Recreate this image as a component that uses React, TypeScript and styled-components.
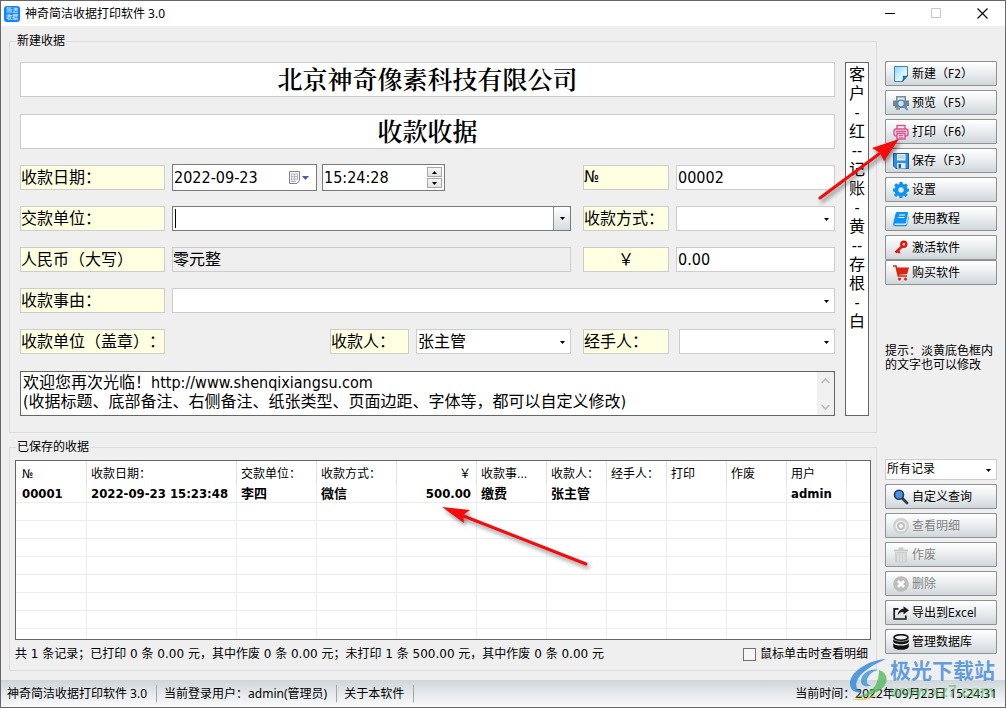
import React from 'react';
import styled, { createGlobalStyle, css } from 'styled-components';

const uiFont = '"DejaVu Sans Condensed", "Noto Sans CJK SC", sans-serif';
const titleFont = '"Noto Sans", "Noto Sans CJK SC", sans-serif';
const line = '#cdcdcd';
const dark = '#666666';

const GlobalStyle = createGlobalStyle`
  *, *::before, *::after { box-sizing: border-box; }
  body { margin: 0; background: #efefef; text-spacing-trim: space-all; }
  input, select, textarea, button {
    font: inherit; color: inherit; margin: 0; border-radius: 0; outline: 0;
    text-spacing-trim: inherit;
  }
`;

const Window = styled.div`
  position: relative;
  display: flex;
  flex-direction: column;
  min-height: 100vh;
  border: 1px solid ${dark};
  background: #efefef;
  color: #000;
  font-family: ${uiFont};
  font-size: 12px;
  line-height: 15px;
`;

const TitleBar = styled.header`
  display: flex;
  align-items: center;
  height: 25px;
  padding-left: 3px;
  background: #fff;
  font-family: ${titleFont};
`;

const AppIcon = styled.span`
  display: flex;
  align-items: center;
  justify-content: center;
  width: 16px;
  height: 16px;
  margin-right: 5px;
  border-radius: 3px;
  background: #0a84ff;
  color: #fff;
  font-size: 6px;
  line-height: 7px;
`;

const Caption = styled.h1`
  flex: 1;
  margin: 0;
  font-size: 12px;
  font-weight: 400;
`;

const WindowButton = styled.button<{ $dim?: boolean }>`
  width: 46px;
  height: 25px;
  padding: 0;
  border: 0;
  background: transparent;
  color: ${p => (p.$dim ? '#c8c8c8' : '#000')};
  svg { display: block; margin: 0 auto; }
`;

const Body = styled.main`
  flex: 1;
  display: grid;
  grid-template-columns: minmax(0, 1fr) 112px;
  grid-template-rows: auto 1fr;
  gap: 7px 8px;
  padding: 8px 8px 9px;
`;

const Group = styled.fieldset`
  display: flex;
  min-width: 0;
  margin: 0;
  border: 1px solid #dcdcdc;
`;

const FormGroup = styled(Group)`
  gap: 10px;
  padding: 13px 7px 16px 10px;
`;

const SavedGroup = styled(Group)`
  position: relative;
  flex-direction: column;
  padding: 5px 5px 0;
`;

const FormLegend = styled.legend`
  margin-left: -4px;
  padding: 0 1px;
  line-height: 15px;
`;

const SavedLegend = styled(FormLegend)`
  margin-left: 1px;
`;

const Receipt = styled.div`
  flex: 1;
  display: flex;
  flex-direction: column;
  min-width: 0;
  font-size: 16px;
  line-height: 19px;
`;

const Heading = styled.input`
  width: 100%;
  height: 35px;
  margin-bottom: 17px;
  padding: 0 0 3px;
  border: 1px solid ${line};
  background: #fff;
  text-align: center;
  font-family: "Noto Serif CJK SC", "Noto Sans CJK SC", serif;
  font-size: 25px;
  font-weight: 600;
  & + & { margin-bottom: 16px; }
`;

const Rows = styled.div`
  display: flex;
  flex-direction: column;
  gap: 16px;
  margin-bottom: 17px;
`;

const Row = styled.div`
  display: flex;
  align-items: center;
  gap: 7px;
  height: 25px;
`;

const Main = styled.div<{ $end?: boolean }>`
  flex: 1;
  display: flex;
  align-items: center;
  justify-content: ${p => (p.$end ? 'flex-end' : 'flex-start')};
  gap: ${p => (p.$end ? 7 : 5)}px;
  min-width: 0;
  margin-right: 5px;
`;

const Field = styled.input<{ $w?: number; $kind?: 'name' | 'off'; $center?: boolean }>`
  flex: ${p => (p.$w ? `0 0 ${p.$w}px` : '1')};
  width: ${p => (p.$w ? `${p.$w}px` : 'auto')};
  min-width: 0;
  height: 25px;
  padding: ${p => (p.$kind ? '0 0 3px' : '0 1px')};
  border: 1px solid ${line};
  background: ${p => (p.$kind === 'name' ? '#ffffe1' : p.$kind === 'off' ? '#efefef' : '#fff')};
  text-align: ${p => (p.$center ? 'center' : 'left')};
`;

const SelectBox = styled.div<{ $w?: number; $h?: number; $indent?: number }>`
  position: relative;
  flex: ${p => (p.$w ? `0 0 ${p.$w}px` : p.$h ? 'none' : '1')};
  height: ${p => p.$h || 25}px;
  padding-left: ${p => p.$indent || 0}px;
  select {
    appearance: none;
    display: block;
    width: 100%;
    height: 100%;
    padding: 0 20px 0 1px;
    border: 1px solid ${line};
    background: #fff;
  }
  svg {
    position: absolute;
    right: 6px;
    top: 50%;
    margin-top: -1px;
    pointer-events: none;
  }
`;

const Boxed = styled.div<{ $w?: number; $h: number }>`
  flex: ${p => (p.$w ? `0 0 ${p.$w}px` : '1')};
  display: flex;
  align-items: center;
  min-width: 0;
  height: ${p => p.$h}px;
  border: 1px solid #7a7a7a;
  background: #fff;
  input {
    flex: 1;
    min-width: 0;
    height: 100%;
    padding: 0 1px;
    border: 0;
    background: transparent;
  }
`;

const Caret = styled.i`
  width: 1px;
  height: 19px;
  margin-left: 2px;
  background: #000;
`;

const raised = css`
  border: 1px solid #8f9294;
  background: linear-gradient(#fff, #eceff0 45%, #cfd6da);
`;

const DropButton = styled.button`
  width: 17px;
  height: 100%;
  padding: 0;
  border: 0;
  border-left: 1px solid #8f9294;
  background: linear-gradient(#fff, #eceff0 45%, #d5dce0);
  svg { display: block; margin: 0 auto; }
`;

const CalendarButton = styled.button`
  width: 28px;
  height: 100%;
  padding: 0;
  border: 0;
  background: transparent;
  svg { display: block; }
`;

const Spinner = styled.div`
  display: flex;
  flex-direction: column;
  gap: 1px;
  margin-right: 2px;
  button {
    width: 15px;
    height: 10px;
    padding: 0;
    border: 1px solid #a8a8a8;
    background: linear-gradient(#f6f6f6, #e2e2e2);
  }
  svg { display: block; margin: 0 auto; }
`;

const Memo = styled.div`
  display: flex;
  height: 45px;
  border: 1px solid ${dark};
  background: #fff;
  textarea {
    flex: 1;
    min-width: 0;
    padding: 1px 2px;
    border: 0;
    resize: none;
    overflow: hidden;
    background: transparent;
    white-space: pre;
  }
`;

const ScrollTrack = styled.div`
  display: flex;
  flex-direction: column;
  justify-content: space-between;
  align-items: center;
  width: 17px;
  padding: 6px 0 5px;
  background: #f0f0f0;
`;

const SideNote = styled.textarea`
  width: 24px;
  padding: 2px 0;
  border: 1px solid ${dark};
  resize: none;
  overflow: hidden;
  background: #fff;
  text-align: center;
  && { font-size: 16px; line-height: 19px; }
`;

const Side = styled.aside<{ $top: number }>`
  position: relative;
  display: flex;
  flex-direction: column;
  gap: 4px;
  padding-top: ${p => p.$top}px;
`;

const ButtonPair = styled.div`
  display: flex;
  flex-direction: column;
`;

const SideButton = styled.button`
  display: flex;
  align-items: center;
  gap: 3px;
  width: 100%;
  height: 25px;
  padding: 1px 7px 0;
  ${raised}
  border-radius: 1px;
  text-align: left;
  white-space: nowrap;
  svg { flex: none; margin-bottom: 1px; }
  &:disabled { color: #838383; }
`;

const Hint = styled.p`
  margin: 55px 0 0;
  line-height: 14px;
`;

const TableBox = styled.div`
  flex: 1 1 180px;
  min-height: 180px;
  height: 180px;
  overflow: hidden;
  border: 1px solid ${dark};
  background: #fff;
`;

const Table = styled.table`
  width: 100%;
  table-layout: fixed;
  border-collapse: separate;
  border-spacing: 0;
  th, td {
    padding: 0 5px 0 4px;
    border-right: 1px solid #ededed;
    text-align: left;
    white-space: nowrap;
    overflow: hidden;
  }
  th:last-child, td:last-child { border-right: 0; }
  th:first-child, td:first-child { padding-left: 6px; }
  th { height: 24px; padding-top: 3px; font-weight: 400; border-right-color: #e2e2e2; }
  td {
    height: 18px;
    border-bottom: 1px solid #ededed;
    font-size: 13px;
    font-weight: 700;
    line-height: 17px;
  }
  th:nth-child(5), td:nth-child(5) { text-align: right; }
`;

const Summary = styled.div`
  display: flex;
  justify-content: space-between;
  align-items: center;
  height: 30px;
  padding: 0 3px 2px 0;
  font-family: "DejaVu Sans", "Noto Sans CJK SC", sans-serif;
`;

const Check = styled.label`
  display: flex;
  align-items: center;
  gap: 4px;
  input {
    appearance: none;
    width: 13px;
    height: 13px;
    border: 1px solid #707070;
    background: #f6f6f6;
  }
`;

const StatusBar = styled.footer`
  display: flex;
  align-items: center;
  height: 27px;
  padding: 0 8px 0 6px;
  background: linear-gradient(#ced5d9, #eceff1 65%, #f8f9fa);
  font-family: ${titleFont};
`;

const StatusItem = styled.span`
  height: 17px;
  margin-right: 7px;
  padding-right: 9px;
  border-right: 1px solid #a3a8ab;
  line-height: 17px;
`;

const Clock = styled.span`
  margin-left: auto;
`;

const Arrow = styled.svg<{ $x: number; $y: number }>`
  position: absolute;
  left: ${p => p.$x}px;
  top: ${p => p.$y}px;
  z-index: 2;
  pointer-events: none;
  filter: drop-shadow(2px 3px 2px rgba(0, 0, 0, 0.45));
`;

const Watermark = styled.div`
  position: absolute;
  right: 8px;
  bottom: 5px;
  z-index: 3;
  display: flex;
  align-items: flex-end;
  pointer-events: none;
`;

const WatermarkText = styled.div`
  width: 107px;
  color: rgba(45, 125, 215, 0.72);
  font-family: "Noto Sans CJK SC", sans-serif;
  font-size: 21px;
  font-weight: 700;
  line-height: 26px;
  white-space: nowrap;
  small {
    display: block;
    color: rgba(80, 185, 95, 0.5);
    font-family: "Liberation Sans", sans-serif;
    font-size: 16px;
    line-height: 20px;
  }
`;

const Down = ({ color = '#000' }: { color?: string }) => (
  <svg width="5" height="3" viewBox="0 0 5 3"><path d="M0 0h5L2.500 3z" fill={color} /></svg>
);
const Up = () => (
  <svg width="5" height="3" viewBox="0 0 5 3"><path d="M0 3h5L2.500 0z" fill="#000" /></svg>
);

type SelectProps = { name: string; options: string[]; w?: number; h?: number; indent?: number };

const Select = ({ name, options, w, h, indent }: SelectProps) => (
  <SelectBox $w={w} $h={h} $indent={indent}>
    <select aria-label={name}>{options.map(o => <option key={o}>{o}</option>)}</select>
    <Down />
  </SelectBox>
);

const icons: Record<string, React.ReactNode> = {
  page: (
    <>
      <defs><linearGradient id="pg" x1="0" y1="0" x2="1" y2="1"><stop offset="0" stopColor="#8fd6fb" /><stop offset=".7" stopColor="#e9f8ff" /><stop offset="1" stopColor="#b5e3fb" /></linearGradient></defs>
      <path d="M1.500.500h13v9.500l-5 5.500h-8z" fill="url(#pg)" stroke="#3d86b8" />
      <path d="M14.500 9.500c-1.500 1-3 .8-4.500.5.500 2 .3 3.800-.8 5.500z" fill="#1b6fb5" stroke="#174f86" strokeWidth=".6" />
    </>
  ),
  preview: (
    <>
      <path d="M3 1h10v5H3z" fill="#7d8b95" /><path d="M4.500 2.500h7V6h-7z" fill="#dfe8ee" />
      <path d="M0 5.500h16V11h-2v2H2v-2H0z" fill="#77838c" />
      <circle cx="8" cy="8.500" r="3.300" fill="#cfe5f6" stroke="#4c86b8" strokeWidth="1.300" />
      <path d="M10.500 11l4.300 4" stroke="#5f92bd" strokeWidth="1.800" />
      <path d="M3 12h4v3H3z" fill="#8d99a2" />
    </>
  ),
  print: (
    <g fill="none" stroke="#d8568f" strokeWidth="1.400">
      <path d="M4 5V1.500h8V5" /><rect x="1" y="5" width="14" height="7" rx="2" fill="#f8cfe0" />
      <path d="M3 7.500h10" /><path d="M4 9.500h8V15H4z" fill="#f5dbe7" /><path d="M6 11.500h4M6 13.300h4" strokeWidth="1.100" />
    </g>
  ),
  save: (
    <>
      <path d="M.5.500h15v15H3l-2.500-2.500z" fill="#2f8ee0" stroke="#1c5f9f" />
      <path d="M4 1h8.500v6.500H4z" fill="#e7f4ff" /><path d="M5 3h6.500M5 5h6.500" stroke="#8ebfe6" />
      <path d="M4 10h8.500v5.500H4z" fill="#dcecf8" /><path d="M5.500 11h2.500v4H5.500z" fill="#1c5f9f" />
    </>
  ),
  gear: (
    <path fillRule="evenodd" fill="#0b93f5" d="M6.500 0h3l.4 2.100 1.300.5L13 1.400 14.900 3.400l-1.300 1.700.6 1.400 1.800.3v2.700l-2 .4-.6 1.300 1.300 1.800-2 2-1.800-1.300-1.300.5L9.400 16H6.600l-.5-1.900-1.400-.5L3 14.900 1 13l1.300-1.800L1.800 9.900 0 9.500V6.700l1.900-.4.5-1.300L1.200 3.300 3.200 1.300 5 2.600l1.200-.5zM8 5.300a2.700 2.700 0 1 0 0 5.400 2.700 2.700 0 0 0 0-5.400z" />
  ),
  book: (
    <>
      <path d="M4.500 1h9.700c.8 0 1 .5.8 1.200L13 11.500c-.2.600-.6 1-1.300 1H2.500c-1 0-1.500 1.500-.4 1.500h10.400c.6 0 1-.4 1.200-1L15.600 5c.5.300.5.700.4 1.200L14 14c-.2.800-.8 1.300-1.600 1.300H2C.5 15.300-.2 14 .2 12.500L2.500 2.700C2.800 1.600 3.400 1 4.500 1z" fill="#0b93f5" />
      <path d="M6 4h6M5.300 6.500h6" stroke="#fff" />
    </>
  ),
  key: (
    <g fill="none" stroke="#e5140c" strokeWidth="2.400">
      <circle cx="10.800" cy="4.300" r="2.500" /><path d="M9 6.500 2.500 12.500M3.800 10l3 3" />
    </g>
  ),
  cart: (
    <>
      <path d="M0 1h3l2.300 10H14" fill="none" stroke="#dc2410" strokeWidth="1.600" />
      <path d="M3 2.500h13l-1.800 6.500L4.700 10z" fill="#dc2410" />
      <circle cx="6.500" cy="14" r="1.500" fill="#dc2410" /><circle cx="12.500" cy="14" r="1.500" fill="#dc2410" />
    </>
  ),
  search: (
    <>
      <path d="m9.500 9.500 4.500 4.500" stroke="#2c3c4b" strokeWidth="2.800" strokeLinecap="round" />
      <circle cx="6" cy="5.800" r="4.500" fill="#4a90e8" stroke="#28394a" strokeWidth="1.600" />
    </>
  ),
  eye: (
    <>
      <circle cx="8" cy="8" r="8" fill="#d1d1d1" /><circle cx="8" cy="8" r="4.800" fill="#c2c2c2" stroke="#eee" strokeWidth="1.500" />
      <circle cx="8" cy="8" r="2" fill="#f2f2f2" />
    </>
  ),
  trash: (
    <>
      <path d="M1 2.500h14v2H1zM5.500.500h5v2h-5z" fill="#cbcbcb" /><path d="M2 5h12v10.500H2z" fill="#cfcfcf" />
      <path d="M5 6v8.500M8 6v8.500M11 6v8.500" stroke="#eaeaea" />
    </>
  ),
  remove: (
    <>
      <circle cx="8" cy="8" r="7.800" fill="#bdbdbd" />
      <path d="m5 5 6 6M11 5l-6 6" stroke="#fff" strokeWidth="2.600" />
    </>
  ),
  share: (
    <>
      <path d="M5.500 3.800H1.200V14h11.600v-3.500" fill="none" stroke="#1c1c1c" strokeWidth="1.700" />
      <path d="M10.500 1.200 16 5.300l-5.500 4.200V7C7.500 6.800 6 8 4.800 10.500 5 6.500 7 4 10.500 3.800z" fill="#1c1c1c" />
    </>
  ),
  database: (
    <g fill="#111">
      <ellipse cx="8" cy="3.500" rx="7" ry="2.800" fill="#efefef" stroke="#111" strokeWidth="1.600" />
      <path d="M.2 5.200c1.500 3.100 14.100 3.100 15.600 0v2.600c-1.500 3.300-14.100 3.300-15.600 0zM.2 9.200c1.500 3.100 14.100 3.100 15.600 0v3.500c-1.500 4.200-14.100 4.200-15.600 0z" />
    </g>
  ),
};

const Action = ({ icon, text, disabled }: { icon: string; text: string; disabled?: boolean }) => (
  <SideButton disabled={disabled}>
    <svg width="16" height="16" viewBox="0 0 16 16">{icons[icon]}</svg>
    {text}
  </SideButton>
);

const columns: [string, number | undefined, string][] = [
  ['№', 71, '00001'],
  ['收款日期：', 150, '2022-09-23 15:23:48'],
  ['交款单位：', 80, '李四'],
  ['收款方式：', 80, '微信'],
  ['￥', 80, '500.00'],
  ['收款事...', 70, '缴费'],
  ['收款人：', 60, '张主管'],
  ['经手人：', 60, ''],
  ['打印', 60, ''],
  ['作废', 60, ''],
  ['用户', 60, 'admin'],
  ['', undefined, ''],
];

export default function App() {
  return (
    <>
      <GlobalStyle />
      <Window lang="zh-CN">
        <TitleBar>
          <AppIcon>简洁<br />收据</AppIcon>
          <Caption>神奇简洁收据打印软件 3.0</Caption>
          <WindowButton aria-label="最小化">
            <svg width="11" height="11" viewBox="0 0 11 11"><path d="M0 5.500h10" stroke="currentColor" /></svg>
          </WindowButton>
          <WindowButton aria-label="最大化" $dim>
            <svg width="11" height="11" viewBox="0 0 11 11"><path d="M.5.500h9v9h-9z" fill="none" stroke="currentColor" /></svg>
          </WindowButton>
          <WindowButton aria-label="关闭">
            <svg width="11" height="11" viewBox="0 0 11 11"><path d="m.5.500 10 10M10.500.500l-10 10" stroke="currentColor" strokeWidth="1.100" /></svg>
          </WindowButton>
        </TitleBar>

        <Body>
          <FormGroup>
            <FormLegend>新建收据</FormLegend>
            <Receipt>
              <Heading aria-label="公司名称" defaultValue="北京神奇像素科技有限公司" />
              <Heading aria-label="收据标题" defaultValue="收款收据" />
              <Rows>
                <Row>
                  <Field $w={145} $kind="name" aria-label="日期名称" defaultValue="收款日期：" />
                  <Main>
                    <Boxed $w={145} $h={27}>
                      <input aria-label="收款日期" defaultValue="2022-09-23" />
                      <CalendarButton aria-label="选择日期">
                        <svg width="22" height="13" viewBox="0 0 22 13">
                          <path d="M1.500.500h10v9l-2.500 3H1.500z" fill="#f4f4f6" stroke="#8b8481" />
                          <path d="M3 3h7M3 5.500h7M3 8h7M3 10.500h5M3.500 3v8M6.500 3v8M9.500 3v6" stroke="#a9afc4" strokeWidth=".8" />
                          <path d="M14 5h7l-3.500 4z" fill="#4b5f96" />
                        </svg>
                      </CalendarButton>
                    </Boxed>
                    <Boxed $w={123} $h={27}>
                      <input aria-label="收款时间" defaultValue="15:24:28" />
                      <Spinner>
                        <button aria-label="增加"><Up /></button>
                        <button aria-label="减少"><Down /></button>
                      </Spinner>
                    </Boxed>
                  </Main>
                  <Field $w={86} $kind="name" aria-label="编号名称" defaultValue="№" />
                  <Field $w={159} aria-label="编号" defaultValue="00002" />
                </Row>
                <Row>
                  <Field $w={145} $kind="name" aria-label="交款单位名称" defaultValue="交款单位：" />
                  <Main>
                    <Boxed $h={25}>
                      <Caret />
                      <input aria-label="交款单位" />
                      <DropButton aria-label="展开交款单位"><Down /></DropButton>
                    </Boxed>
                  </Main>
                  <Field $w={86} $kind="name" aria-label="收款方式名称" defaultValue="收款方式：" />
                  <Select w={159} name="收款方式" options={['']} />
                </Row>
                <Row>
                  <Field $w={145} $kind="name" aria-label="大写金额名称" defaultValue="人民币（大写）" />
                  <Main><Field $kind="off" readOnly aria-label="大写金额" value="零元整" /></Main>
                  <Field $w={86} $kind="name" $center aria-label="金额名称" defaultValue="￥" />
                  <Field $w={159} aria-label="金额" defaultValue="0.00" />
                </Row>
                <Row>
                  <Field $w={145} $kind="name" aria-label="收款事由名称" defaultValue="收款事由：" />
                  <Select name="收款事由" options={['']} />
                </Row>
                <Row>
                  <Field $w={145} $kind="name" aria-label="收款单位名称" defaultValue="收款单位（盖章）：" />
                  <Main $end>
                    <Field $w={79} $kind="name" aria-label="收款人名称" defaultValue="收款人：" />
                    <Select w={155} name="收款人" options={['张主管']} />
                  </Main>
                  <Field $w={86} $kind="name" aria-label="经手人名称" defaultValue="经手人：" />
                  <Select w={159} indent={3} name="经手人" options={['']} />
                </Row>
              </Rows>
              <Memo>
                <textarea
                  aria-label="底部备注"
                  defaultValue={'欢迎您再次光临！http://www.shenqixiangsu.com\n(收据标题、底部备注、右侧备注、纸张类型、页面边距、字体等，都可以自定义修改)'}
                />
                <ScrollTrack>
                  <svg width="9" height="6" viewBox="0 0 9 6"><path d="m.7 5 3.800-4 3.800 4" fill="none" stroke="#bdbdbd" strokeWidth="1.800" /></svg>
                  <svg width="9" height="6" viewBox="0 0 9 6"><path d="m.7 1 3.800 4 3.800-4" fill="none" stroke="#bdbdbd" strokeWidth="1.800" /></svg>
                </ScrollTrack>
              </Memo>
            </Receipt>
            <SideNote aria-label="右侧备注" defaultValue={'客\n户\n-\n红\n--\n记\n账\n-\n黄\n--\n存\n根\n-\n白'} />
          </FormGroup>

          <Side $top={27}>
            <Action icon="page" text="新建（F2）" />
            <Action icon="preview" text="预览（F5）" />
            <Action icon="print" text="打印（F6）" />
            <Action icon="save" text="保存（F3）" />
            <Action icon="gear" text="设置" />
            <Action icon="book" text="使用教程" />
            <ButtonPair>
              <Action icon="key" text="激活软件" />
              <Action icon="cart" text="购买软件" />
            </ButtonPair>
            <Hint>提示：淡黄底色框内的文字也可以修改</Hint>
            <Arrow $x={-70} $y={99} width="90" height="70" viewBox="0 0 90 70">
              <path d="M5 65 64 21" stroke="#f40b0b" strokeWidth="3" strokeLinecap="round" />
              <path d="M84 6 69 28 65 20 57 15z" fill="#f40b0b" />
            </Arrow>
          </Side>

          <SavedGroup>
            <SavedLegend>已保存的收据</SavedLegend>
            <TableBox>
              <Table>
                <colgroup>{columns.map(([name, w]) => <col key={name} width={w} />)}</colgroup>
                <thead><tr>{columns.map(([name]) => <th key={name}>{name}</th>)}</tr></thead>
                <tbody>
                  <tr>{columns.map(([name, , value]) => <td key={name}>{value}</td>)}</tr>
                  {Array.from({ length: 20 }, (_, i) => (
                    <tr key={i}>{columns.map(([name]) => <td key={name} />)}</tr>
                  ))}
                </tbody>
              </Table>
            </TableBox>
            <Summary>
              <span>共 1 条记录；已打印 0 条 0.00 元，其中作废 0 条 0.00 元；未打印 1 条 500.00 元，其中作废 0 条 0.00 元</span>
              <Check><input type="checkbox" />鼠标单击时查看明细</Check>
            </Summary>
            <Arrow $x={426} $y={42} width="160" height="75" viewBox="0 0 160 75">
              <path d="M25 18 150 67" stroke="#f40b0b" strokeWidth="3" strokeLinecap="round" />
              <path d="m6 10 28 3-7 5 1 8z" fill="#f40b0b" />
            </Arrow>
          </SavedGroup>

          <Side $top={19}>
            <Select h={21} name="记录范围" options={['所有记录']} />
            <Action icon="search" text="自定义查询" />
            <Action icon="eye" text="查看明细" disabled />
            <Action icon="trash" text="作废" disabled />
            <Action icon="remove" text="删除" disabled />
            <Action icon="share" text="导出到Excel" />
            <Action icon="database" text="管理数据库" />
          </Side>
        </Body>

        <StatusBar>
          <StatusItem>神奇简洁收据打印软件 3.0</StatusItem>
          <StatusItem>当前登录用户：admin(管理员)</StatusItem>
          <StatusItem>关于本软件</StatusItem>
          <Clock>当前时间：2022年09月23日 15:24:31</Clock>
        </StatusBar>

        <Watermark>
          <svg width="42" height="46" viewBox="0 0 42 46" opacity=".8">
            <path d="M38 3C22 4 4 14 2 26c-1 8 6 12 12 10-5-2-7-6-5-11C13 15 27 8 38 3z" fill="#2f86d8" />
            <path d="M30 14c-8-2-17 4-17 11 0 5 6 7 10 4-3 0-5-2-4-5 1-5 6-9 11-10z" fill="#3b93dd" />
            <path d="M31 14c10 3 10 14 1 20-7 5-17 7-26 8 9-3 17-6 21-12 3-5 4-11 4-16z" fill="#55bb5c" />
            <path d="M4 43c9 0 19-1 27-6-6 6-17 9-27 6z" fill="#e4bd37" />
          </svg>
          <WatermarkText>极光下载站<small>www.xz7.com</small></WatermarkText>
        </Watermark>
      </Window>
    </>
  );
}
